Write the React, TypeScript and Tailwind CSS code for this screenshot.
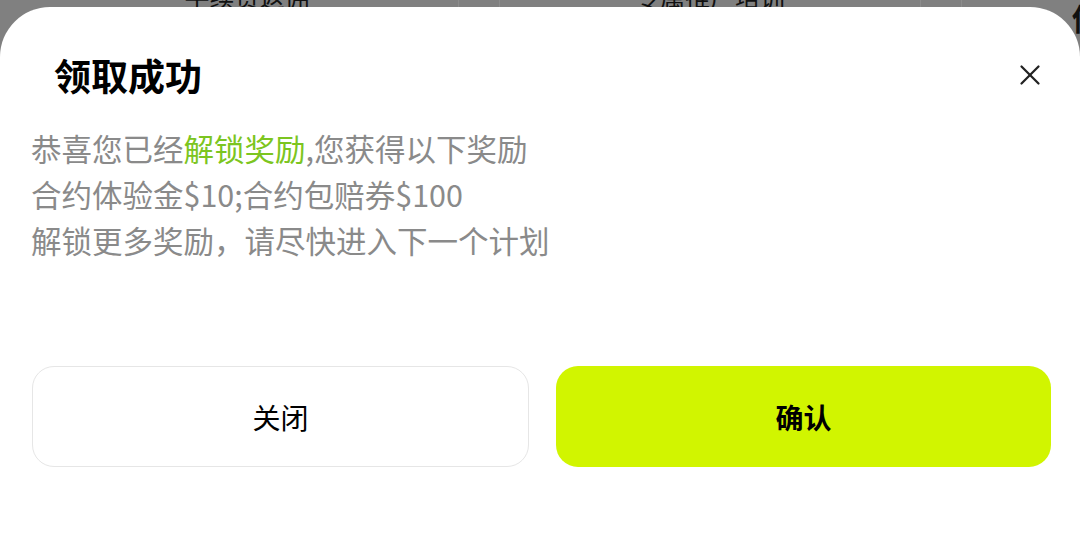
import { X } from "lucide-react";

const font = { fontFamily: '"Noto Sans CJK SC", "Noto Sans", sans-serif' };

function BackdropRow() {
  // the page behind the dialog, only its top edge peeks out
  return (
    <div className="flex h-[60px] text-[25px] leading-none text-[#111]">
      <div className="w-[36px] shrink-0" />
      <div className="w-[422px] shrink-0 flex justify-center -mt-[16px]">手续费返佣</div>
      <div className="w-[42px] shrink-0 border-x border-[#8c8c8c]" />
      <div className="w-[420px] shrink-0 flex justify-center -mt-[16px]">专属推广培训</div>
      <div className="w-[42px] shrink-0 border-x border-[#8c8c8c]" />
      <div className="w-[300px] shrink-0 pl-[110px] pt-[2px] text-[30px] font-bold whitespace-nowrap">借</div>
    </div>
  );
}

export default function App() {
  return (
    <div className="relative h-[548px] w-[1080px] overflow-hidden bg-[#808080]" style={font}>
      <BackdropRow />

      <div className="absolute inset-x-0 top-[7px] bottom-0 bg-white rounded-t-[50px] pl-[32px] pr-[29px]">
        <div className="flex items-center justify-between pt-[46px]">
          <h2 className="pl-[22px] text-[37px] leading-[44px] font-bold text-black">领取成功</h2>
          <button className="mr-[4px] text-[#222]">
            <X className="size-[34px]" strokeWidth={1.6} />
          </button>
        </div>

        <div className="mt-[28px] -ml-[1px] text-[30.5px] leading-[46px] text-[#8a8a8a]">
          <p>
            恭喜您已经<span className="text-[#7cc520]">解锁奖励</span>,您获得以下奖励
          </p>
          <p>合约体验金$10;合约包赔券$100</p>
          <p>解锁更多奖励，请尽快进入下一个计划</p>
        </div>

        <div className="mt-[103px] flex gap-[27px]">
          <button className="flex-1 h-[101px] rounded-[22px] border-[1.5px] border-[#e6e6e6] bg-white text-[28px] font-normal text-black">
            关闭
          </button>
          <button className="flex-1 h-[101px] rounded-[22px] bg-[#d1f500] text-[28px] font-bold text-black">
            确认
          </button>
        </div>
      </div>
    </div>
  );
}
